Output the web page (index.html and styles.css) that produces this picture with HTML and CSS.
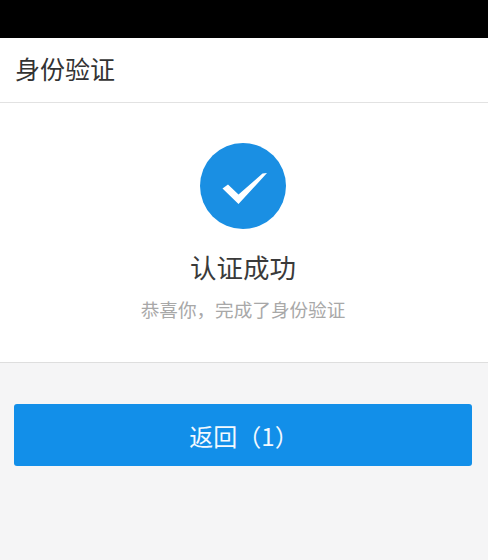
FILE: index.html
```html
<!DOCTYPE html>
<html lang="zh-CN">
<head>
<meta charset="utf-8">
<title>身份验证</title>
<link rel="stylesheet" href="styles.css">
</head>
<body>
<div class="statusbar"></div>
<header class="navbar">身份验证</header>
<main class="result">
  <svg class="icon" viewBox="0 0 86 86" aria-hidden="true">
    <circle cx="43" cy="43" r="43" fill="#1a8fe3"/>
    <path d="M22.5 45.5 L28 41.5 L38.5 51.5 L62.5 30.5 L67 30 L38.5 61 Z" fill="#fff"/>
  </svg>
  <h1 class="title">认证成功</h1>
  <p class="desc">恭喜你，完成了身份验证</p>
</main>
<div class="actions">
  <button class="btn">返回（1）</button>
</div>
</body>
</html>
```
FILE: styles.css
```css
* { box-sizing: border-box; }
html, body { margin: 0; height: 100%; }
body {
  background: #f5f5f6;
  font-family: "Noto Sans CJK SC", "Noto Sans", sans-serif;
  overflow: hidden;
}
.statusbar { height: 38px; background: #000; }
.navbar {
  height: 65px;
  background: #fff;
  border-bottom: 1px solid #e2e2e2;
  padding: 0 0 5px 15px;
  display: flex;
  align-items: center;
  font-size: 25px;
  color: #333;
}
.result {
  height: 260px;
  background: #fff;
  border-bottom: 1px solid #dedede;
  padding-top: 40px;
  display: flex;
  flex-direction: column;
  align-items: center;
}
.icon { width: 86px; height: 86px; display: block; margin-right: 2px; }
.title {
  margin: 20px 2px 0 0;
  font-size: 26.5px;
  font-weight: 400;
  line-height: 36px;
  color: #3a3a3a;
}
.desc {
  margin: 11px 2px 0 0;
  font-size: 18.6px;
  line-height: 26px;
  color: #a8a8a8;
}
.actions { padding: 41px 16px 0 14px; }
.btn {
  display: block;
  width: 100%;
  height: 62px;
  border: 0;
  border-radius: 3px;
  background: #128fe9;
  color: #f2f9fe;
  font-family: inherit;
  font-size: 24px;
  padding: 0 0 0 2px;
}
```
